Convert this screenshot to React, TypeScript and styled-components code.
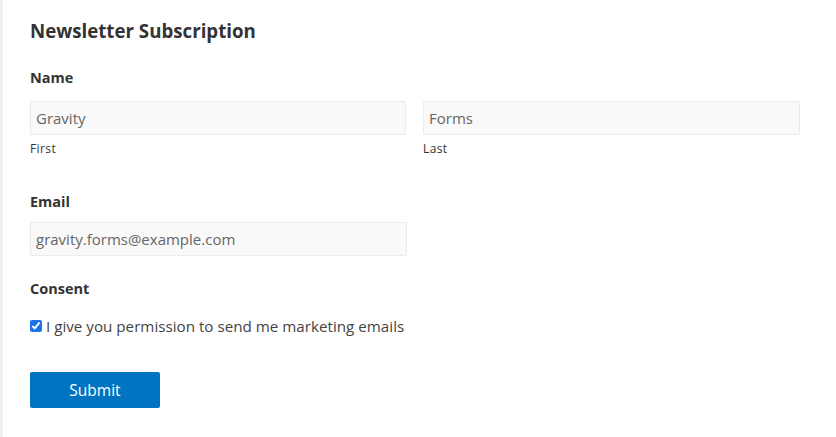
import React from "react";
import styled, { createGlobalStyle } from "styled-components";

const Global = createGlobalStyle`
  html, body { margin: 0; padding: 0; background: #fff; }
  body { font-family: "Open Sans", "Noto Sans", sans-serif; color: #333; }
  * { box-sizing: border-box; }
`;

const Page = styled.div`
  border-left: 3px solid #f1f1f1;
  min-height: 437px;
  padding: 17px 36px 0 27px;
`;

const Title = styled.h2`
  margin: 0 0 23px;
  font-size: 18.7px;
  font-weight: 700;
  line-height: 28px;
  color: #333;
`;

const Fieldset = styled.div<{ $gap?: number }>`
  margin-bottom: ${(p) => p.$gap ?? 0}px;
`;

const Label = styled.div<{ $mb?: number }>`
  font-size: 14.5px;
  font-weight: 700;
  line-height: 20px;
  color: #333;
  margin-bottom: ${(p) => p.$mb ?? 13}px;
`;

const Row = styled.div`
  display: grid;
  grid-template-columns: 376px 377px;
  column-gap: 17px;
`;

const Col = styled.div`
  display: flex;
  flex-direction: column;
`;

const Input = styled.input<{ $w?: number }>`
  width: ${(p) => (p.$w ? `${p.$w}px` : "100%")};
  height: 34px;
  border: 1px solid #ececec;
  border-radius: 2px;
  background: #f9f9f9;
  padding: 0 5px;
  font-family: "Open Sans", "Noto Sans", sans-serif;
  font-size: 15px;
  color: #666;
  outline: none;
`;

const Sub = styled.div`
  font-size: 12px;
  line-height: 16px;
  margin-top: 6px;
  color: #333;
  letter-spacing: 0.4px;
`;

const CheckRow = styled.label`
  display: flex;
  align-items: center;
  gap: 4px;
  font-size: 15.2px;
  color: #444;
  line-height: 20px;
`;

const Check = styled.input`
  margin: 0;
  width: 12px;
  height: 12px;
  accent-color: #1a73e8;
`;

const Button = styled.button`
  width: 130px;
  height: 36px;
  border: none;
  border-radius: 2px;
  background: #0074c1;
  color: #fff;
  font-family: "Open Sans", "Noto Sans", sans-serif;
  font-size: 15.5px;
  cursor: pointer;
`;

export default function App() {
  return (
    <>
      <Global />
      <Page>
        <Title>Newsletter Subscription</Title>
        <Fieldset $gap={35}>
          <Label>Name</Label>
          <Row>
            <Col>
              <Input defaultValue="Gravity" />
              <Sub>First</Sub>
            </Col>
            <Col>
              <Input defaultValue="Forms" />
              <Sub>Last</Sub>
            </Col>
          </Row>
        </Fieldset>
        <Fieldset $gap={23}>
          <Label $mb={10}>Email</Label>
          <Input $w={377} defaultValue="gravity.forms@example.com" />
        </Fieldset>
        <Fieldset $gap={36}>
          <Label $mb={17}>Consent</Label>
          <CheckRow>
            <Check type="checkbox" defaultChecked />
            I give you permission to send me marketing emails
          </CheckRow>
        </Fieldset>
        <Button>Submit</Button>
      </Page>
    </>
  );
}
